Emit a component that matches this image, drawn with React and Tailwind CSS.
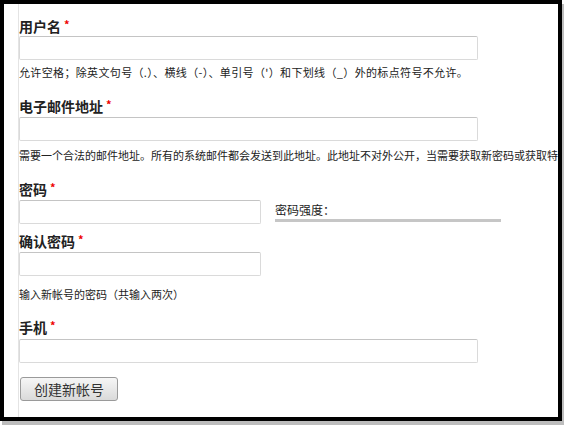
import React from 'react'

const CJK = { fontFamily: '"Noto Sans CJK SC", "Liberation Sans", sans-serif' }

function Label({ text, className = '' }) {
  return (
    <div className={`h-[18px] leading-[18px] text-[14px] font-bold text-[#222] ${className}`}>
      {text}
      <span className="ml-[3px] align-top text-[11px] leading-[14px] text-[#e00]">*</span>
    </div>
  )
}

function Field({ className = '' }) {
  return (
    <input
      type="text"
      className={`block h-[24px] rounded-[2px] border border-[#dadada] border-t-[#c4c4c4] bg-white outline-none ${className}`}
    />
  )
}

function Desc({ children, className = '' }) {
  return (
    <div className={`h-[14px] whitespace-nowrap text-[11px] leading-[14px] text-[#222] ${className}`}>
      {children}
    </div>
  )
}

export default function App() {
  return (
    <div className="relative h-[425px] w-[564px] bg-white" style={CJK}>
      <div className="h-[421px] w-[562px] overflow-hidden border-4 border-black bg-white shadow-[2px_4px_0_#bdbdbd]">
        <div className="ml-[14px] h-full border-l border-[#e4e4e4] pt-[13px]">
          {/* 用户名 */}
          <Label text="用户名" />
          <Field className="mt-[1px] w-[459px]" />
          <Desc className="mt-[5px] tracking-[0.35px]">允许空格；除英文句号（.）、横线（-）、单引号（'）和下划线（_）外的标点符号不允许。</Desc>

          {/* 电子邮件地址 */}
          <Label text="电子邮件地址" className="mt-[18px]" />
          <Field className="mt-[2px] w-[459px]" />
          <Desc className="mt-[7px]">需要一个合法的邮件地址。所有的系统邮件都会发送到此地址。此地址不对外公开，当需要获取新密码或获取特定新闻和通知时才会使用。</Desc>

          {/* 密码 */}
          <Label text="密码" className="mt-[18px]" />
          <div className="mt-[2px] flex items-start">
            <Field className="w-[242px]" />
            <div className="ml-[14px]">
              <div className="mt-[3px] h-[14px] text-[12px] leading-[14px] text-[#222]">密码强度：</div>
              <div className="mt-[2px] h-[3px] w-[226px] bg-[#c6c6c6]" />
            </div>
          </div>

          {/* 确认密码 */}
          <Label text="确认密码" className="mt-[8px]" />
          <Field className="mt-[2px] w-[242px]" />
          <Desc className="mt-[11px]">输入新帐号的密码（共输入两次）</Desc>

          {/* 手机 */}
          <Label text="手机" className="mt-[17px]" />
          <Field className="mt-[3px] w-[459px]" />

          <button className="ml-[1px] mt-[14px] h-[24px] w-[98px] rounded-[3px] border border-[#9a9a9a] bg-gradient-to-b from-[#f6f6f6] to-[#dadada] text-[14px] leading-[22px] text-[#333]">
            创建新帐号
          </button>
        </div>
      </div>
    </div>
  )
}
